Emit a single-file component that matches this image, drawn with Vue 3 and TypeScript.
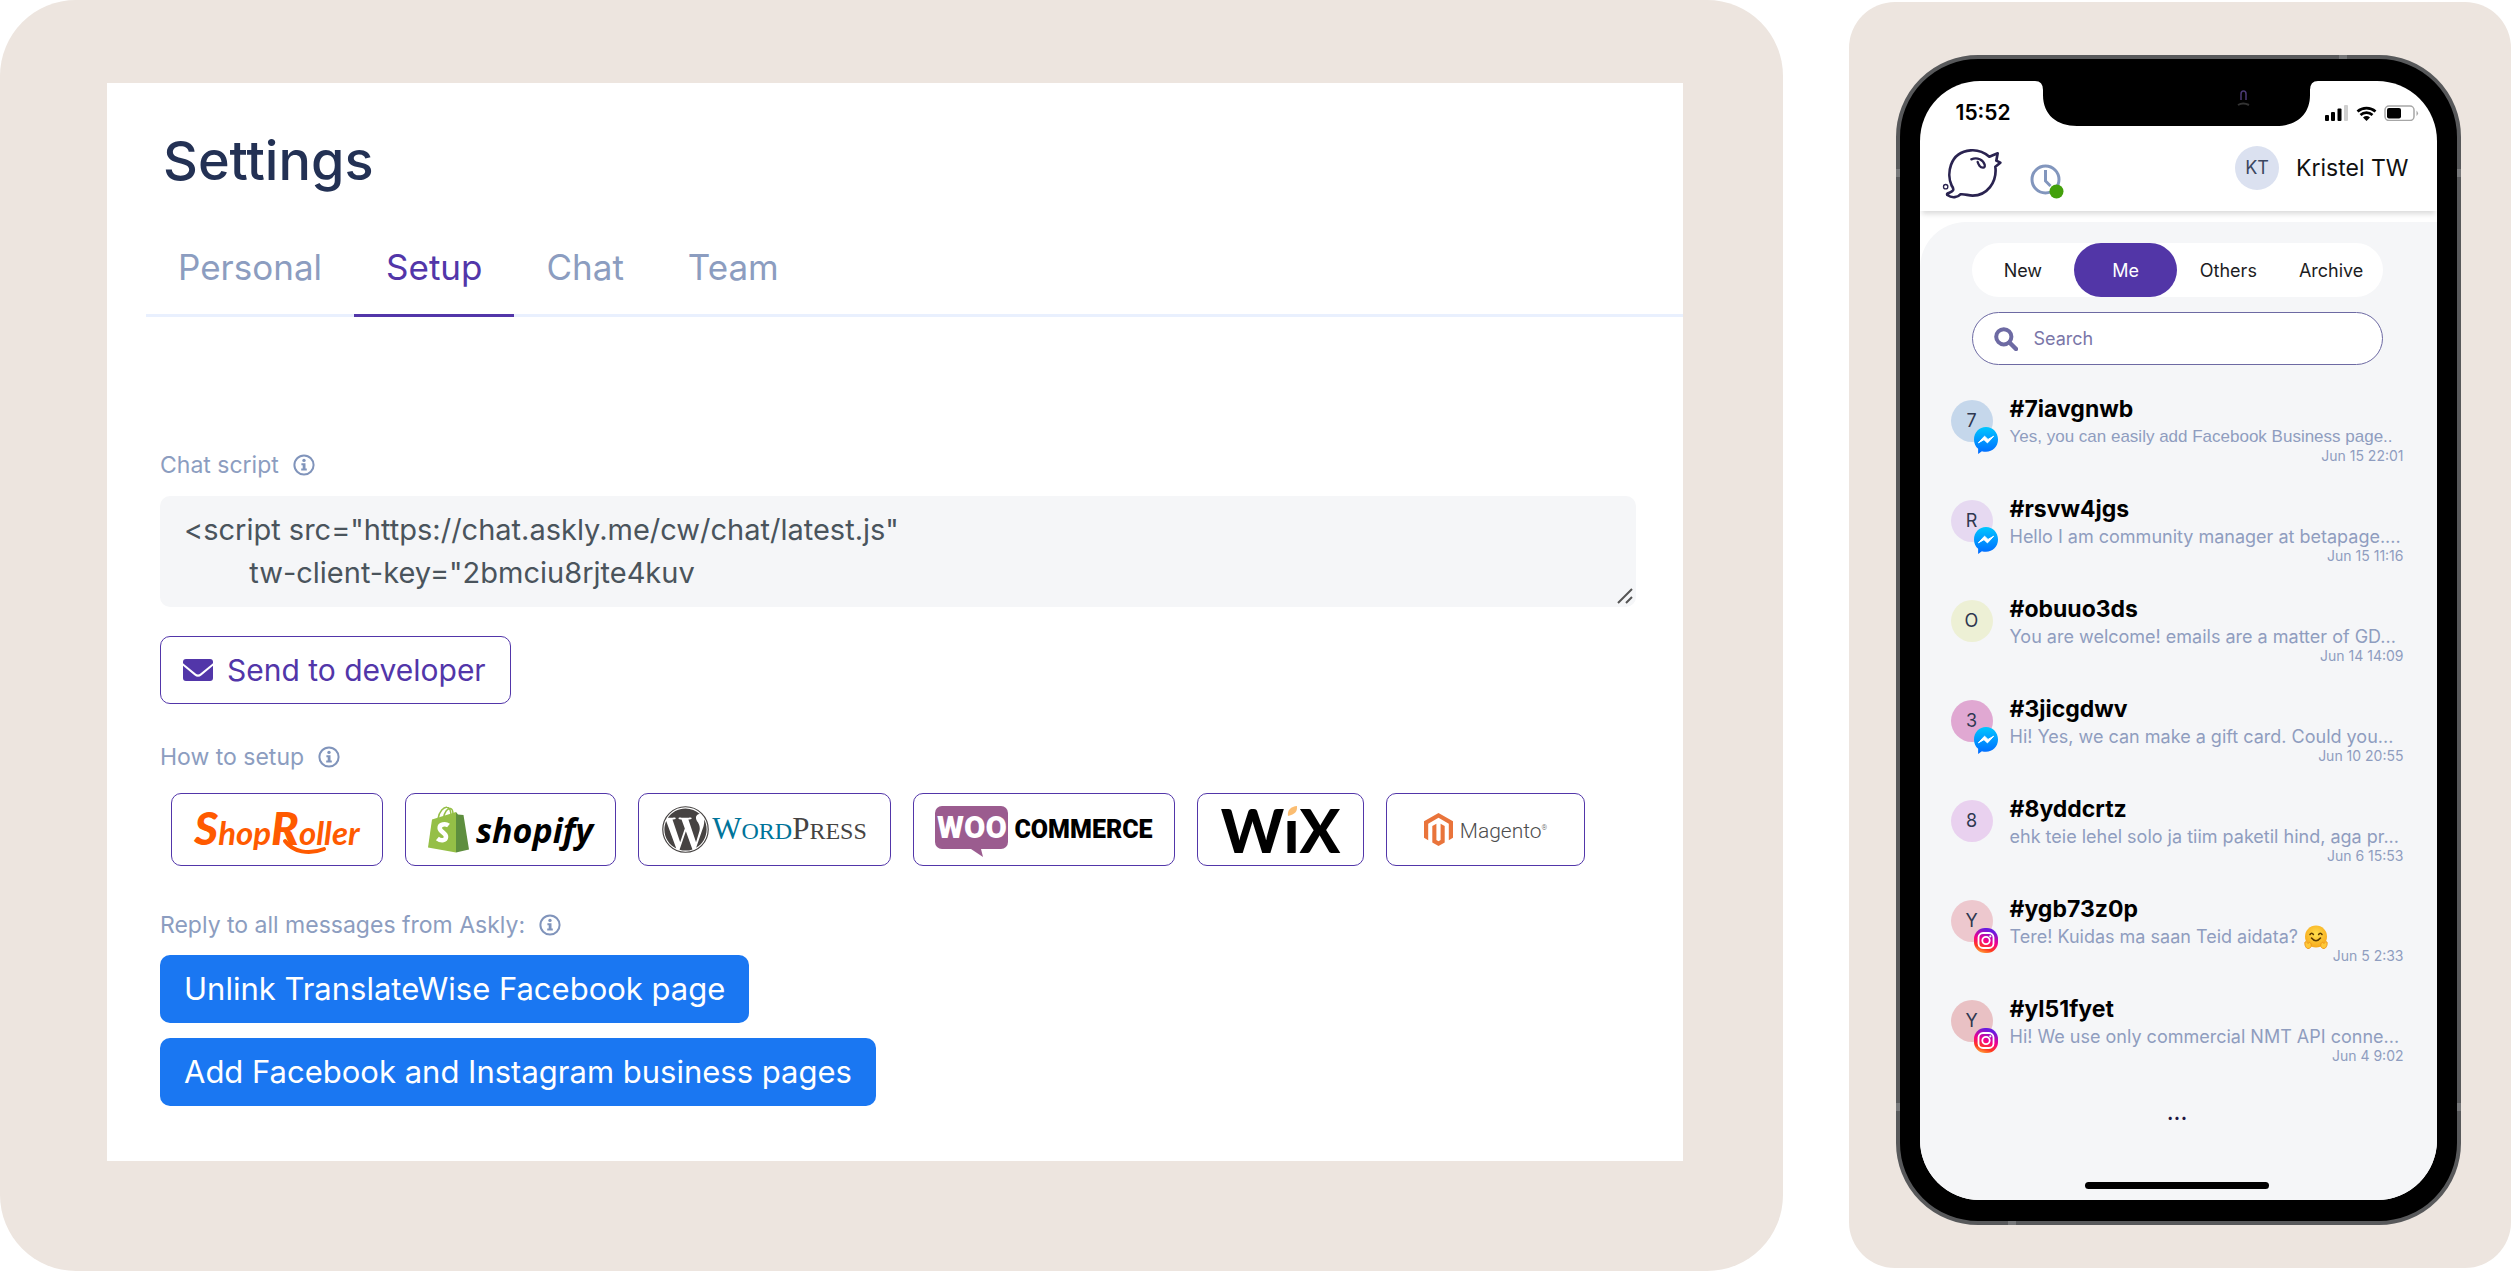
<script setup lang="ts">
import { ref } from 'vue'

type Channel = 'messenger' | 'instagram' | null

interface Conversation {
  name: string
  initial: string
  color: string
  channel: Channel
  preview: string
  time: string
  hug?: boolean
  compact?: boolean
}

const tabs: string[] = ['Personal', 'Setup', 'Chat', 'Team']
const activeTab = ref('Setup')

const filters: string[] = ['New', 'Me', 'Others', 'Archive']
const activeFilter = ref('Me')

const chatScript = ref(
  '<script src="https://chat.askly.me/cw/chat/latest.js"\n        tw-client-key="2bmciu8rjte4kuv',
)
const query = ref('')

const conversations: Conversation[] = [
  { name: '#7iavgnwb', initial: '7', color: '#c5d7eb', channel: 'messenger', preview: 'Yes, you can easily add Facebook Business page..', time: 'Jun 15 22:01', compact: true },
  { name: '#rsvw4jgs', initial: 'R', color: '#e6d9f1', channel: 'messenger', preview: 'Hello I am community manager at betapage....', time: 'Jun 15 11:16' },
  { name: '#obuuo3ds', initial: 'O', color: '#edf0d5', channel: null, preview: 'You are welcome! emails are a matter of GD...', time: 'Jun 14 14:09' },
  { name: '#3jicgdwv', initial: '3', color: '#e0a8d2', channel: 'messenger', preview: 'Hi! Yes, we can make a gift card. Could you...', time: 'Jun 10 20:55' },
  { name: '#8yddcrtz', initial: '8', color: '#e9d1ef', channel: null, preview: 'ehk teie lehel solo ja tiim paketil hind, aga pr...', time: 'Jun 6 15:53' },
  { name: '#ygb73z0p', initial: 'Y', color: '#edc8ce', channel: 'instagram', preview: 'Tere! Kuidas ma saan Teid aidata?', time: 'Jun 5 2:33', hug: true },
  { name: '#yl51fyet', initial: 'Y', color: '#e9c1c4', channel: 'instagram', preview: 'Hi! We use only commercial NMT API conne...', time: 'Jun 4 9:02' },
]
</script>

<template>
  <svg class="defs" aria-hidden="true">
    <defs>
      <symbol id="info" viewBox="0 0 22 22">
        <circle cx="11" cy="11" r="9.6" fill="none" stroke="currentColor" stroke-width="2" />
        <circle cx="11" cy="6.4" r="1.7" fill="currentColor" />
        <path d="M8.4 9.2h4.1v5.3h1.3v2H8.2v-2h1.5v-3.3H8.4z" fill="currentColor" />
      </symbol>
      <linearGradient id="messenger-fill" x1="0" y1="0" x2="0" y2="1">
        <stop offset="0" stop-color="#00c6ff" />
        <stop offset="1" stop-color="#0068ff" />
      </linearGradient>
      <linearGradient id="instagram-fill" x1="0" y1="1" x2="0.35" y2="0">
        <stop offset="0" stop-color="#ffd54a" />
        <stop offset="0.3" stop-color="#ff3a1e" />
        <stop offset="0.6" stop-color="#f4008c" />
        <stop offset="1" stop-color="#6a1be0" />
      </linearGradient>
      <radialGradient id="hug-fill" cx="0.5" cy="0.4" r="0.6">
        <stop offset="0" stop-color="#ffe14d" />
        <stop offset="1" stop-color="#f7a81b" />
      </radialGradient>
    </defs>
  </svg>

  <div class="page">
    <main class="panel panel-settings">
      <section class="card">
        <h1>Settings</h1>
        <nav class="tabs">
          <button
            v-for="tab in tabs"
            :key="tab"
            type="button"
            class="tab"
            :class="{ active: tab === activeTab }"
            @click="activeTab = tab"
          >{{ tab }}</button>
        </nav>

        <div class="form">
          <div class="field-label first">
            <label for="chat-script">Chat script</label>
            <svg class="info"><use href="#info" /></svg>
          </div>
          <div class="script-box">
            <textarea id="chat-script" v-model="chatScript" rows="2" spellcheck="false"></textarea>
            <svg class="grip" viewBox="0 0 16 16" aria-hidden="true">
              <path d="M1 15L15 1M9 15l6-6" />
            </svg>
          </div>
          <button type="button" class="btn btn-outline">
            <svg class="mail" viewBox="0 0 30 22" aria-hidden="true">
              <path d="M3 0h24a3 3 0 0 1 3 3v1.2L17.4 14.6a3.8 3.8 0 0 1-4.8 0L0 4.2V3a3 3 0 0 1 3-3z" />
              <path d="M0 6.8l11.4 9.4a5.6 5.6 0 0 0 7.2 0L30 6.800V19a3 3 0 0 1-3 3H3a3 3 0 0 1-3-3z" />
            </svg>
            Send to developer
          </button>

          <div class="field-label setup">
            <span>How to setup</span>
            <svg class="info"><use href="#info" /></svg>
          </div>
          <div class="platforms">
            <button type="button" class="platform shoproller" aria-label="ShopRoller">
              <span class="shoproller-name"><b>S</b>hop<b>R</b>oller</span>
              <svg class="swash" viewBox="0 0 212 73" width="212" height="73" aria-hidden="true">
                <path d="M113 47c8 11 24 14 39 8" />
              </svg>
            </button>
            <button type="button" class="platform shopify" aria-label="Shopify">
              <svg viewBox="0 0 41 47" width="41" height="47" aria-hidden="true">
                <path d="M10 13C11 5 16 .8 19 1.200c3 .3 4 5 4 9M15.500 12c1-6 4-10 7-9.500 2 .5 2.500 3 2.500 6" fill="none" stroke="#95bf47" stroke-width="1.500" />
                <path d="M4 13.500L28 6v40.500L0 41.500z" fill="#95bf47" />
                <path d="M28 6l2 2.500 5.500.5L41 43.500l-13 3z" fill="#5e8e3e" />
                <path d="M20.500 19.500c-3-2.300-9-1.500-8.800 2.600.2 4 6.600 4.800 6.300 8.900-.2 4-5.600 4-8.600 1.500" fill="none" stroke="#fff" stroke-width="4.600" />
              </svg>
              <span class="shopify-name">shopify</span>
            </button>
            <button type="button" class="platform wordpress" aria-label="WordPress">
              <svg viewBox="0 0 24 24" width="47" height="47" aria-hidden="true">
                <circle cx="12" cy="12" r="11.600" fill="none" stroke="#464342" stroke-width="0.600" />
                <path fill="#464342" d="M21.469 6.825c.84 1.537 1.318 3.300 1.318 5.175 0 3.979-2.156 7.456-5.363 9.325l3.295-9.527c.615-1.540.820-2.771.820-3.864 0-.405-.026-.780-.070-1.110m-7.981.105c.647-.030 1.232-.105 1.232-.105.582-.075.514-.930-.067-.899 0 0-1.755.135-2.880.135-1.064 0-2.850-.150-2.850-.150-.585-.030-.661.855-.075.885 0 0 .540.061 1.125.090l1.680 4.605-2.370 7.080L5.354 6.900c.649-.030 1.234-.100 1.234-.100.585-.075.516-.930-.065-.896 0 0-1.746.138-2.874.138-.200 0-.438-.008-.690-.015C4.911 3.150 8.235 1.215 12 1.215c2.809 0 5.365 1.072 7.286 2.833-.046-.003-.091-.009-.141-.009-1.060 0-1.812.923-1.812 1.914 0 .890.513 1.643 1.060 2.531.411.720.890 1.643.890 2.977 0 .915-.354 1.994-.821 3.479l-1.075 3.585-3.900-11.610zM12 22.784c-1.059 0-2.081-.153-3.048-.437l3.237-9.406 3.315 9.087c.024.053.050.101.078.149-1.120.393-2.325.609-3.582.609M1.211 12c0-1.564.336-3.050.935-4.390L7.290 21.709C3.694 19.960 1.212 16.271 1.211 12" />
              </svg>
              <span class="wordpress-name"><span class="wp-word"><b>W</b>ORD</span><b>P</b>RESS</span>
            </button>
            <button type="button" class="platform woo" aria-label="WooCommerce">
              <span class="woo-bubble">WOO
                <svg viewBox="0 0 12 8" width="12" height="8" aria-hidden="true"><path d="M0 0h10l2 8z" fill="#9b5c8f" /></svg>
              </span>
              <span class="woo-name">COMMERCE</span>
            </button>
            <button type="button" class="platform wix" aria-label="Wix">
              <span class="wix-name">WiX</span>
              <svg class="leaf" viewBox="0 0 14 14" width="14" height="14" aria-hidden="true">
                <path d="M0 0h14v14H0z" fill="#fff" />
                <path d="M3 10C2 4 6 .5 12 0c.5 6-2 8-9 10z" fill="#fbbd71" />
              </svg>
            </button>
            <button type="button" class="platform magento" aria-label="Magento">
              <svg viewBox="0 0 29 33" width="29" height="33" aria-hidden="true">
                <path fill="#e9743b" d="M14.500 0L29 8.300v16.500l-4.200 2.400V10.800l-10.300-6-10.300 6v16.400L0 24.800V8.300z" />
                <path fill="#e9743b" d="M8.300 13l4.100-2.200V27l2.100 1.200 2.100-1.200V10.800l4.100 2.200v16.500L14.500 33l-6.200-3.500z" />
              </svg>
              <span class="magento-name">Magento<sup>®</sup></span>
            </button>
          </div>

          <div class="field-label reply">
            <span>Reply to all messages from Askly:</span>
            <svg class="info"><use href="#info" /></svg>
          </div>
          <div class="actions">
            <button type="button" class="btn btn-blue">Unlink TranslateWise Facebook page</button>
            <button type="button" class="btn btn-blue">Add Facebook and Instagram business pages</button>
          </div>
        </div>
      </section>
    </main>

    <aside class="panel panel-phone">
      <div class="phone">
        <i class="band band-top"></i>
        <i class="band band-bottom"></i>
        <i class="band band-left-upper"></i>
        <i class="band band-right-upper"></i>
        <i class="band band-left-lower"></i>
        <i class="band band-right-lower"></i>
        <div class="screen">
          <svg class="notch" viewBox="0 0 283 45" width="283" height="45" aria-hidden="true">
            <path d="M0 0Q8 0 8 9v5c0 20 14 31 34 31h199c20 0 34-11 34-31V9q0-9 8-9z" />
            <path d="M206 19v-6q0-3 2.500-3t2.500 3v6" fill="none" stroke="#4b3a75" stroke-width="1.500" />
            <path d="M203 24q5-3 11 0" fill="none" stroke="#333" stroke-width="2" />
          </svg>
          <div class="status">
            <span class="clock">15:52</span>
            <svg viewBox="0 0 94 16" width="94" height="16" aria-hidden="true">
              <rect x="0" y="10" width="4" height="6" rx="1" />
              <rect x="6" y="7" width="4" height="9" rx="1" />
              <rect x="12.500" y="3.500" width="4" height="12.500" rx="1" />
              <rect x="19" y="0" width="4" height="16" rx="1" fill="#cfcfcf" />
              <path d="M32.500 6.500a14 14 0 0 1 18 0M35.500 10a9 9 0 0 1 12 0" fill="none" stroke="#000" stroke-width="2.800" />
              <path d="M38 12.500a5.500 5.500 0 0 1 7 0L41.500 16z" />
              <rect x="60" y="1" width="29" height="14.500" rx="4" fill="none" stroke="#a6a6a6" stroke-width="1.500" />
              <rect x="62" y="3" width="14" height="10.500" rx="2" />
              <path d="M91.500 5.500q3 2.800 0 5.600z" fill="#a6a6a6" />
            </svg>
          </div>
          <header class="topbar">
            <svg class="logo" viewBox="36 48 180 162" width="60" height="54" aria-hidden="true">
              <g fill="none" stroke="#2a2350" stroke-width="8" stroke-linejoin="round" stroke-linecap="round">
                <path d="M178 80l25-10-4 22 12 6-15 12c6 48-26 87-68 87-14 0-24-6-37-4-8 9-24 13-39 2-4-7 12-6 17-14 2-4-1-10-4-14C50 136 56 66 122 61c24-2 42 7 56 19z" />
                <path d="M124 88c18-8 36 2 40 16 3 12-10 10-15 4-3-4-5-8-6-12" stroke-width="7" />
                <circle cx="47" cy="170" r="6.500" stroke-width="4" />
              </g>
            </svg>
            <svg class="hours" viewBox="0 0 35 36" width="35" height="36" aria-hidden="true">
              <g fill="none" stroke="#8296bd" stroke-width="3">
                <circle cx="15.500" cy="15.500" r="13.500" />
                <path d="M15.500 6v11l5 5" />
              </g>
              <circle cx="26.500" cy="27.500" r="7" fill="#43a00b" />
            </svg>
            <div class="user">
              <span class="user-avatar">KT</span>
              <span class="user-name">Kristel TW</span>
            </div>
          </header>

          <div class="inbox">
            <div class="filters">
              <button
                v-for="filter in filters"
                :key="filter"
                type="button"
                class="filter"
                :class="{ active: filter === activeFilter }"
                @click="activeFilter = filter"
              >{{ filter }}</button>
            </div>
            <label class="search">
              <svg viewBox="0 0 24 24" width="24" height="24" aria-hidden="true">
                <circle cx="9.800" cy="9.800" r="7.600" fill="none" stroke="#6d6aa3" stroke-width="4" />
                <path d="M15.500 15.500l6.500 6.500" stroke="#6d6aa3" stroke-width="4.400" stroke-linecap="round" />
              </svg>
              <input v-model="query" type="search" placeholder="Search" aria-label="Search" />
            </label>
            <ul class="conversations">
              <li v-for="item in conversations" :key="item.name" class="conversation">
                <div class="avatar" :style="{ background: item.color }">
                  {{ item.initial }}
                  <svg v-if="item.channel === 'messenger'" class="badge" viewBox="0 0 25 28" aria-hidden="true">
                    <path d="M12.500 0C19.500 0 25 5.600 25 13s-5.500 12.700-12.500 12.700c-1.500 0-3-.2-4.300-.6L4.300 28v-5.300C1.600 20.500 0 17 0 13 0 5.600 5.500 0 12.500 0z" fill="url(#messenger-fill)" />
                    <path d="M4.500 16.500l6.500-7 3.600 3.400 5.900-3.400-6.500 7-3.600-3.400z" fill="#fff" stroke="#fff" stroke-linejoin="round" />
                  </svg>
                  <svg v-else-if="item.channel === 'instagram'" class="badge" viewBox="0 0 24 27" aria-hidden="true">
                    <rect y="1" width="24" height="25" rx="11" fill="url(#instagram-fill)" />
                    <g fill="none" stroke="#fff" stroke-width="1.800">
                      <rect x="4.500" y="6" width="15" height="15" rx="4.500" />
                      <circle cx="12" cy="13.500" r="3.700" />
                    </g>
                    <circle cx="16.300" cy="9.300" r="1.100" fill="#fff" />
                  </svg>
                </div>
                <div class="summary">
                  <h2>{{ item.name }}</h2>
                  <p class="preview" :class="{ compact: item.compact }">
                    {{ item.preview }}
                    <svg v-if="item.hug" class="hug" viewBox="0 0 24 24" role="img" aria-label="hugging face">
                      <circle cx="12" cy="11.500" r="11" fill="url(#hug-fill)" />
                      <path d="M6 9.500q1.700-2.600 3.400 0M14.600 9.500q1.700-2.600 3.400 0" fill="none" stroke="#5c3b00" stroke-width="1.500" stroke-linecap="round" />
                      <path d="M7.500 13q4.500 5.500 9 0" fill="none" stroke="#5c3b00" stroke-width="1.600" stroke-linecap="round" />
                      <path d="M1 17c1-1 2 .5 3 1.500 1-2 3-1 3.300 1.500.3 2-1.300 3.500-3.300 3.500S.3 20 1 17zM23 17c-1-1-2 .5-3 1.500-1-2-3-1-3.300 1.500-.3 2 1.300 3.500 3.300 3.500s3.700-3.500 3-6.500z" fill="#ffc93a" stroke="#ee9a1c" />
                    </svg>
                  </p>
                  <time>{{ item.time }}</time>
                </div>
              </li>
            </ul>
            <div class="more">...</div>
            <div class="home-bar"></div>
          </div>
        </div>
      </div>
    </aside>
  </div>
</template>

<style>
body {
  margin: 0;
  background: #fff;
}
</style>

<style scoped>
.defs {
  position: absolute;
  width: 0;
  height: 0;
}

.page {
  display: flex;
  gap: 66px;
  align-items: stretch;
  font-family: Inter, "Liberation Sans", sans-serif;
}

.page *,
.page {
  box-sizing: border-box;
}

button {
  font-family: inherit;
  margin: 0;
  cursor: pointer;
}

.panel {
  background: #ede5df;
}

.panel-settings {
  flex: 1;
  min-width: 0;
  padding: 83px 100px 110px 107px;
  border-radius: 76px;
}

.card {
  padding: 46px 0 55px;
  background: #fff;
}

h1 {
  margin: 0 0 34px 56px;
  font-size: 54px;
  line-height: 64px;
  font-weight: 500;
  color: #233154;
}

.tabs {
  display: flex;
  margin-left: 39px;
  box-shadow: inset 0 -3px #e9f0fe;
}

.tab {
  padding: 20px 32px 27px;
  border: 0;
  border-bottom: 3px solid transparent;
  background: none;
  font-size: 35px;
  line-height: 40px;
  color: #8c9dc0;
}

.tab.active {
  border-color: #5236a9;
  color: #5236a9;
}

.form {
  padding: 0 47px 0 53px;
}

.field-label {
  display: flex;
  align-items: center;
  gap: 14px;
  font-size: 23px;
  line-height: 28px;
  color: #8c9dc0;
}

.field-label.first {
  margin: 134px 0 17px;
}

.field-label.setup {
  margin: 39px 0 22px;
}

.field-label.reply {
  margin: 45px 0 16px;
}

.info {
  width: 22px;
  height: 22px;
  color: #8094bb;
}

.script-box {
  position: relative;
}

textarea {
  display: block;
  width: 100%;
  height: 111px;
  padding: 12px 24px;
  border: 0;
  border-radius: 10px;
  background: #f5f6f8;
  font: 29px/43px Inter, "Liberation Sans", sans-serif;
  color: #4a545c;
  white-space: pre;
  overflow: hidden;
  resize: none;
}

.grip {
  position: absolute;
  right: 3px;
  bottom: 3px;
  width: 16px;
  height: 16px;
  fill: none;
  stroke: #555;
  stroke-width: 2;
}

.btn {
  display: flex;
  align-items: center;
  height: 68px;
  padding: 0 24px;
  border: 0;
  border-radius: 10px;
  font-size: 30px;
  line-height: 40px;
}

.btn-outline {
  gap: 14px;
  margin-top: 29px;
  padding: 0 24px 0 22px;
  border: 1px solid #5236a9;
  background: #fff;
  color: #5236a9;
}

.mail {
  width: 30px;
  height: 22px;
  fill: #5236a9;
}

.btn-blue {
  background: #1a77f2;
  color: #fff;
  font-size: 31px;
}

.actions {
  display: flex;
  flex-direction: column;
  align-items: flex-start;
  gap: 15px;
}

.platforms {
  display: flex;
  flex-wrap: wrap;
  gap: 22px;
  padding-left: 11px;
}

.platform {
  position: relative;
  display: flex;
  align-items: center;
  justify-content: center;
  height: 73px;
  padding: 0;
  border: 1px solid #5236a9;
  border-radius: 10px;
  background: #fff;
  white-space: nowrap;
}

.shoproller {
  width: 212px;
}

.shoproller-name {
  font: italic 700 33px/48px Lato, sans-serif;
  color: #ff5a00;
}

.shoproller-name b {
  font-size: 46px;
}

.swash {
  position: absolute;
  left: 0;
  top: 0;
  fill: none;
  stroke: #ff5a00;
  stroke-width: 4;
  stroke-linecap: round;
}

.shopify {
  width: 211px;
  gap: 7px;
}

.shopify-name {
  font: italic 700 34px/48px "Open Sans", sans-serif;
  color: #000;
}

.wordpress {
  width: 253px;
  gap: 3px;
}

.wordpress-name {
  font: 24px/36px "Liberation Serif", serif;
  color: #464342;
}

.wordpress-name b {
  font-size: 31px;
  font-weight: 400;
}

.wp-word {
  color: #00749a;
}

.woo {
  width: 262px;
  gap: 6px;
}

.woo-bubble {
  position: relative;
  flex: none;
  width: 73px;
  height: 43px;
  margin-bottom: 4px;
  border-radius: 7px;
  background: #9b5c8f;
  font: 900 31px/43px Roboto, sans-serif;
  text-align: center;
  color: #fff;
}

.woo-bubble svg {
  position: absolute;
  left: 36px;
  top: 43px;
}

.woo-name {
  font: 900 25px/40px Roboto, sans-serif;
  color: #000;
}

.wix {
  width: 167px;
}

.wix-name {
  font: 900 60px/72px Lato, sans-serif;
  color: #000;
}

.leaf {
  position: absolute;
  left: 87px;
  top: 12px;
}

.magento {
  width: 199px;
  gap: 7px;
}

.magento-name {
  font: 300 21px/28px Roboto, sans-serif;
  color: #4d4d4d;
}

.magento-name sup {
  font-size: 7px;
}

.panel-phone {
  flex: none;
  align-self: flex-start;
  display: flex;
  justify-content: center;
  width: 662px;
  margin-top: 2px;
  padding: 53px 4px 43px 0;
  border-radius: 46px;
}

.phone {
  position: relative;
  width: 565px;
  padding: 22px 20px 21px;
  border: 4px solid #58595b;
  border-radius: 82px;
  background: #000;
}

.band {
  position: absolute;
  background: #77787a;
}

.band-top,
.band-bottom {
  width: 8px;
  height: 4px;
}

.band-top {
  top: -4px;
  right: 110px;
}

.band-bottom {
  bottom: -4px;
  left: 108px;
}

.band-left-upper,
.band-right-upper,
.band-left-lower,
.band-right-lower {
  width: 4px;
  height: 8px;
}

.band-left-upper,
.band-left-lower {
  left: -4px;
}

.band-right-upper,
.band-right-lower {
  right: -4px;
}

.band-left-upper,
.band-right-upper {
  top: 110px;
}

.band-left-lower,
.band-right-lower {
  bottom: 110px;
}

.screen {
  position: relative;
  display: flex;
  flex-direction: column;
  border-radius: 60px;
  background: #fff;
  overflow: hidden;
}

.notch {
  position: absolute;
  top: 0;
  left: 115px;
}

.status {
  display: flex;
  align-items: center;
  justify-content: space-between;
  padding: 18px 18px 0 36px;
}

.clock {
  font-size: 21px;
  line-height: 28px;
  font-weight: 600;
}

.topbar {
  display: flex;
  align-items: flex-end;
  padding: 19px 28px 11px 22px;
  box-shadow: 0 5px 5px -2px rgba(0, 0, 0, 0.14);
}

.hours {
  margin-left: 28px;
}

.user {
  display: flex;
  align-items: center;
  align-self: flex-start;
  gap: 17px;
  margin-left: auto;
}

.user-avatar {
  width: 44px;
  border-radius: 50%;
  background: #dbe1f0;
  font-size: 18px;
  line-height: 44px;
  text-align: center;
  color: #3b4660;
}

.user-name {
  font-size: 23px;
  line-height: 44px;
  color: #111;
}

.inbox {
  display: flex;
  flex-direction: column;
  margin-top: 11px;
  padding: 21px 33px 11px 31px;
  border-top-left-radius: 46px;
  background: #f5f6f8;
}

.filters {
  display: grid;
  grid-template-columns: repeat(4, 1fr);
  margin: 0 21px 15px;
  border-radius: 27px;
  background: #fff;
}

.filter {
  height: 54px;
  padding: 0;
  border: 0;
  border-radius: 27px;
  background: none;
  font-size: 18px;
  color: #1c1c22;
}

.filter.active {
  background: #5236a7;
  color: #fff;
}

.search {
  display: flex;
  align-items: center;
  gap: 16px;
  height: 53px;
  margin: 0 21px 28px;
  padding: 0 21px;
  border: 1px solid #6d6aa3;
  border-radius: 27px;
  background: #fff;
}

.search input {
  flex: 1;
  min-width: 0;
  padding: 0;
  border: 0;
  outline: 0;
  background: none;
  font: 18px/24px Inter, "Liberation Sans", sans-serif;
  color: #6d6aa3;
}

.search input::placeholder {
  color: #7a76a8;
  opacity: 1;
}

.conversations {
  margin: 0;
  padding: 0;
  list-style: none;
}

.conversation {
  display: flex;
  gap: 17px;
  min-height: 100px;
}

.avatar {
  position: relative;
  flex: none;
  width: 42px;
  height: 42px;
  margin-top: 7px;
  border-radius: 50%;
  font-size: 18px;
  line-height: 42px;
  text-align: center;
  color: #2f3850;
}

.badge {
  position: absolute;
  left: 23px;
  top: 27px;
  width: 24px;
  height: 27px;
}

.summary {
  flex: 1;
  min-width: 0;
}

h2 {
  margin: 0;
  font-size: 23px;
  line-height: 32px;
  font-weight: 700;
  color: #000;
}

.preview {
  display: flex;
  align-items: center;
  gap: 6px;
  margin: 0;
  font-size: 18px;
  line-height: 24px;
  color: #8f9dbf;
  white-space: nowrap;
}

.preview.compact {
  font-family: "Liberation Sans", sans-serif;
  font-size: 17px;
}

.hug {
  width: 24px;
  height: 24px;
}

time {
  display: block;
  font-size: 14px;
  line-height: 14px;
  text-align: right;
  color: #8f9dbf;
}

.more {
  height: 89px;
  font-size: 24px;
  line-height: 38px;
  text-align: center;
  color: #1d1640;
}

.home-bar {
  align-self: center;
  width: 184px;
  height: 7px;
  border-radius: 4px;
  background: #000;
}
</style>
